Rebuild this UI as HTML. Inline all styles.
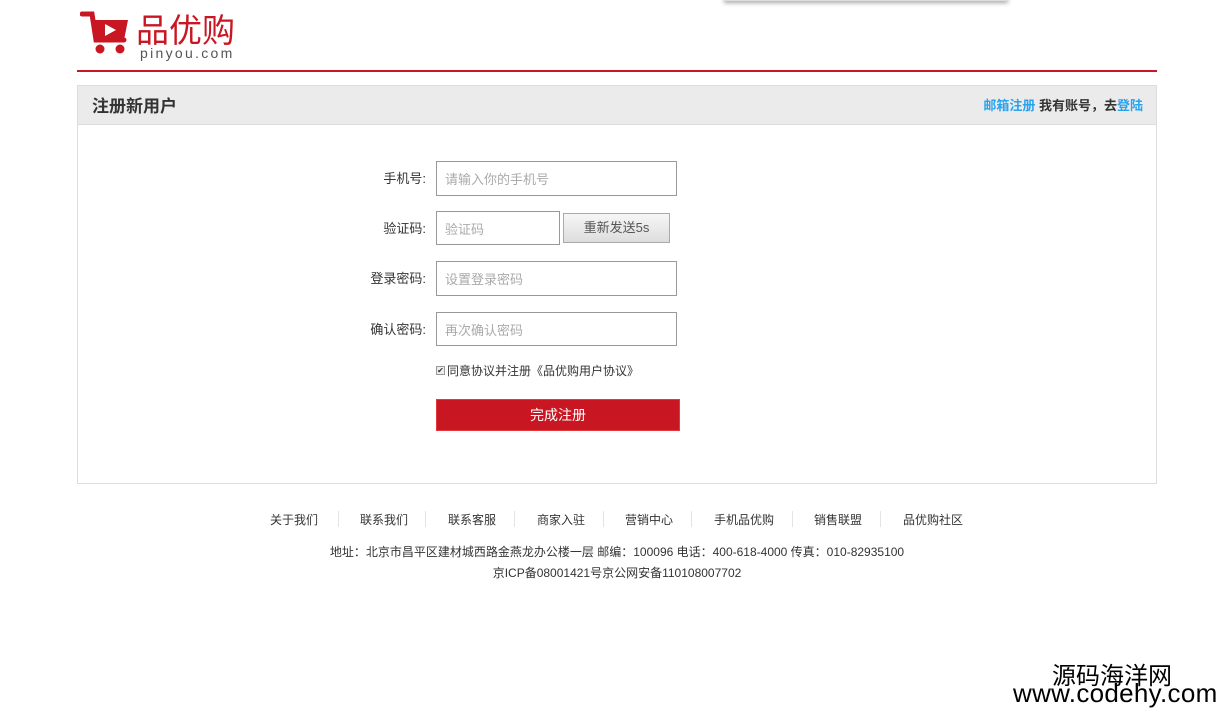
<!DOCTYPE html>
<html><head><meta charset="utf-8"><style>
*{margin:0;padding:0;box-sizing:border-box}
body{width:1219px;height:715px;background:#fff;font-family:"Liberation Sans","Noto Sans CJK SC",sans-serif;font-size:12px;color:#333;position:relative;overflow:hidden}
.abs{position:absolute}
.topbar{left:724px;top:-4px;width:284px;height:5px;background:#ddd;box-shadow:0 2px 4px rgba(0,0,0,.35)}
.redline{left:77px;top:70px;width:1080px;height:2px;background:#c81623}
.panel{left:77px;top:85px;width:1080px;height:399px;border:1px solid #ddd}
.phead{height:39px;background:#ebebeb;border-bottom:1px solid #ddd;position:relative}
.phead h3{position:absolute;left:14px;top:6px;font-size:17px;font-weight:bold;color:#333}
.phead .r{position:absolute;right:13px;top:9px;font-size:13px;font-weight:bold;color:#333}
.phead .r a{color:#28a3ef;text-decoration:none}
.lbl{font-size:13px;color:#333;text-align:right;width:100px}
.inp{border:1px solid #999;height:35px;font-size:13px;color:#aaa;padding:7px 0 0 8px}
.btn{left:436px;top:399px;width:244px;height:32px;background:#c81623;color:#fff;font-size:14px;text-align:center;line-height:31px;border:1px solid #e4393c}
.send{left:563px;top:213px;width:107px;height:30px;border:1px solid #aaa;background:linear-gradient(#f6f6f6,#ddd);font-size:13px;color:#555;text-align:center;line-height:27px}
.foot a{position:absolute;top:511px;font-size:12px;color:#333}
.sep{position:absolute;top:511px;width:1px;height:16px;background:#e4e4e4}
</style></head><body>
<div class="abs topbar"></div>
<svg class="abs" style="left:80px;top:10px" width="52" height="50" viewBox="0 0 52 50">
<path d="M2 4 H12 L16 30 H44" fill="none" stroke="#c81623" stroke-width="5" stroke-linecap="round"/>
<path d="M13 10 H48 L44 30 H16 Z" fill="#c81623"/>
<path d="M25 14 L36 20 L25 26 Z" fill="#fff"/>
<circle cx="20" cy="39" r="4.5" fill="#c81623"/><circle cx="40" cy="39" r="4.5" fill="#c81623"/>
</svg>
<div class="abs" style="left:136px;top:4px;font-size:33px;color:#c81623;letter-spacing:0px">品优购</div>
<div class="abs" style="left:140px;top:45px;font-size:14px;color:#555;letter-spacing:2.3px">pinyou.com</div>
<div class="abs redline"></div>
<div class="abs panel"><div class="phead"><h3>注册新用户</h3><div class="r"><a>邮箱注册</a> 我有账号，去<a>登陆</a></div></div></div>
<div class="abs lbl" style="left:326px;top:168px">手机号:</div>
<div class="abs inp" style="left:436px;top:161px;width:241px">请输入你的手机号</div>
<div class="abs lbl" style="left:326px;top:218px">验证码:</div>
<div class="abs inp" style="left:436px;top:211px;width:124px;height:34px">验证码</div>
<div class="abs send">重新发送5s</div>
<div class="abs lbl" style="left:326px;top:268px">登录密码:</div>
<div class="abs inp" style="left:436px;top:261px;width:241px">设置登录密码</div>
<div class="abs lbl" style="left:326px;top:319px">确认密码:</div>
<div class="abs inp" style="left:436px;top:312px;width:241px;height:34px">再次确认密码</div>
<div class="abs" style="left:436px;top:366px;width:9px;height:9px;border:1px solid #999;background:#eee;font-size:8px;line-height:7px;text-align:center;color:#333">✔</div>
<div class="abs" style="left:447px;top:362px;font-size:12px;color:#333">同意协议并注册《品优购用户协议》</div>
<div class="abs btn">完成注册</div>
<div class="foot">
<a style="left:270px">关于我们</a><div class="sep" style="left:338px"></div>
<a style="left:360px">联系我们</a><div class="sep" style="left:425px"></div>
<a style="left:448px">联系客服</a><div class="sep" style="left:514px"></div>
<a style="left:537px">商家入驻</a><div class="sep" style="left:603px"></div>
<a style="left:625px">营销中心</a><div class="sep" style="left:691px"></div>
<a style="left:714px">手机品优购</a><div class="sep" style="left:792px"></div>
<a style="left:814px">销售联盟</a><div class="sep" style="left:880px"></div>
<a style="left:903px">品优购社区</a>
</div>
<div class="abs" style="left:0;width:1234px;top:543px;text-align:center;font-size:12px;color:#333">地址：北京市昌平区建材城西路金燕龙办公楼一层 邮编：100096 电话：400-618-4000 传真：010-82935100</div>
<div class="abs" style="left:0;width:1234px;top:564px;text-align:center;font-size:12px;color:#333">京ICP备08001421号京公网安备110108007702</div>
<div class="abs" style="left:1052px;top:656px;font-size:24px;color:#000">源码海洋网</div>
<div class="abs" style="left:1013px;top:678px;font-size:26px;color:#000;letter-spacing:0.3px">www.codehy.com</div>
</body></html>
